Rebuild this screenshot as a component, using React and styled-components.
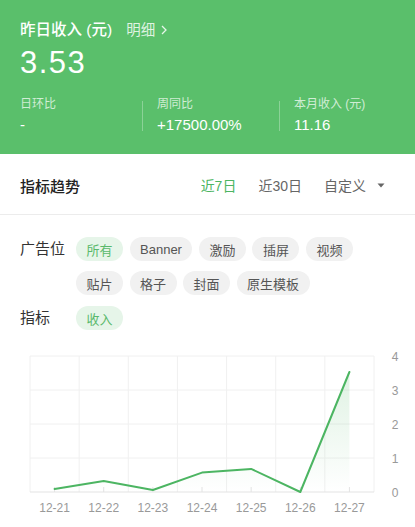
import React from "react";
import styled, { createGlobalStyle } from "styled-components";

const GlobalStyle = createGlobalStyle`
  html, body { margin: 0; padding: 0; background: #fff; }
  body {
    font-family: "Liberation Sans", "Noto Sans CJK SC", sans-serif;
    -webkit-font-smoothing: antialiased;
  }
  * { box-sizing: border-box; }
`;

const Page = styled.div`
  width: 415px;
  background: #fff;
`;

const Header = styled.header`
  background: #5abf6b;
  color: #fff;
  padding: 19px 20px 19px;
`;

const TitleRow = styled.div`
  display: flex;
  align-items: center;
  height: 22px;
`;

const Title = styled.span`
  font-size: 15.5px;
  line-height: 22px;
  font-weight: 500;
`;

const DetailLink = styled.span`
  display: inline-flex;
  align-items: center;
  gap: 6px;
  margin-left: 14px;
  font-size: 14.5px;
  line-height: 22px;
  color: rgba(255, 255, 255, 0.82);
`;

const BigNumber = styled.div`
  margin-top: 4px;
  font-size: 31px;
  letter-spacing: 1.5px;
  line-height: 36px;
`;

const StatsRow = styled.div`
  display: flex;
  align-items: center;
  margin-top: 15px;
`;

const Stat = styled.div`
  width: 122px;
  flex-shrink: 0;
  display: flex;
  flex-direction: column;
  gap: 2px;
  &:last-child {
    flex: 1;
    width: auto;
  }
`;

const StatLabel = styled.span`
  font-size: 12px;
  line-height: 17px;
  color: rgba(255, 255, 255, 0.72);
`;

const StatValue = styled.span`
  font-size: 15px;
  line-height: 20px;
  color: #fff;
`;

const Divider = styled.div`
  width: 1px;
  flex-shrink: 0;
  height: 30px;
  margin-right: 14px;
  background: rgba(255, 255, 255, 0.3);
`;

const SectionBar = styled.div`
  display: flex;
  align-items: center;
  height: 61px;
  padding: 2px 30px 0 20px;
  border-bottom: 1px solid #ececec;
`;

const SectionTitle = styled.span`
  flex: 1;
  font-size: 15px;
  font-weight: 500;
  color: #222;
`;

const Tabs = styled.div`
  display: flex;
  align-items: center;
  gap: 22px;
`;

const Tab = styled.span`
  display: inline-flex;
  align-items: center;
  gap: 11px;
  font-size: 14px;
  color: ${(p) => (p.$active ? "#4cb562" : "#666")};
`;

const Filters = styled.div`
  padding: 22px 20px 0 20px;
  display: flex;
  flex-direction: column;
  gap: 11px;
`;

const FilterRow = styled.div`
  display: flex;
  align-items: flex-start;
`;

const FilterLabel = styled.span`
  width: 56px;
  flex-shrink: 0;
  font-size: 15px;
  line-height: 24px;
  color: #333;
`;

const ChipWrap = styled.div`
  display: flex;
  flex-wrap: wrap;
  column-gap: 6.5px;
  row-gap: 10px;
`;

const Chip = styled.span`
  height: 24px;
  padding: 0 10.5px;
  border-radius: 12px;
  display: inline-flex;
  align-items: center;
  font-size: 13px;
  background: ${(p) => (p.$active ? "#e6f5e9" : "#f1f1f1")};
  color: ${(p) => (p.$active ? "#5ab96c" : "#555")};
`;

const ChartBox = styled.div`
  margin-top: 10px;
`;

const ChartSvg = styled.svg`
  display: block;
`;

const data = [
  { d: "12-21", v: 0.09 },
  { d: "12-22", v: 0.32 },
  { d: "12-23", v: 0.06 },
  { d: "12-24", v: 0.57 },
  { d: "12-25", v: 0.68 },
  { d: "12-26", v: 0 },
  { d: "12-27", v: 3.53 },
];

function Chart() {
  const left = 30;
  const right = 374;
  const top = 16;
  const bottom = 152;
  const colW = (right - left) / data.length;
  const yOf = (v) => bottom - (v / 4) * (bottom - top);
  const pts = data.map((p, i) => [left + colW * (i + 0.5), yOf(p.v)]);
  const line = pts.map((p, i) => `${i ? "L" : "M"}${p[0].toFixed(1)} ${p[1].toFixed(1)}`).join(" ");
  const area = `${line} L${pts[pts.length - 1][0].toFixed(1)} ${bottom} L${pts[0][0].toFixed(1)} ${bottom} Z`;
  return (
    <ChartSvg width="415" height="187" viewBox="0 0 415 187">
      <defs>
        <linearGradient id="fillGrad" x1="0" y1={top} x2="0" y2={bottom} gradientUnits="userSpaceOnUse">
          <stop offset="0" stopColor="#4cb562" stopOpacity="0.2" />
          <stop offset="1" stopColor="#4cb562" stopOpacity="0" />
        </linearGradient>
      </defs>
      {[0, 1, 2, 3].map((i) => (
        <line key={"h" + i} x1={left} x2={right} y1={top + i * 34} y2={top + i * 34} stroke="#f0f0f0" strokeWidth="1" />
      ))}
      {Array.from({ length: 8 }).map((_, i) => (
        <line key={"v" + i} x1={left + i * colW} x2={left + i * colW} y1={top} y2={bottom} stroke="#f0f0f0" strokeWidth="1" />
      ))}
      <line x1={left} x2={right} y1={bottom} y2={bottom} stroke="#e3e3e3" strokeWidth="1" />
      {pts.map((p, i) => (
        <line key={"t" + i} x1={p[0]} x2={p[0]} y1={bottom - 5} y2={bottom} stroke="#e3e3e3" strokeWidth="1" />
      ))}
      <path d={area} fill="url(#fillGrad)" />
      <path d={line} fill="none" stroke="#4cb562" strokeWidth="2" strokeLinejoin="round" strokeLinecap="round" />
      {[4, 3, 2, 1, 0].map((v, i) => (
        <text key={"y" + v} x="395" y={top + i * 34 + 4.5} textAnchor="middle" fontSize="12" fill="#999" fontFamily="Liberation Sans, sans-serif">
          {v}
        </text>
      ))}
      {pts.map((p, i) => (
        <text key={"x" + i} x={p[0]} y="172" textAnchor="middle" fontSize="12" fill="#999" fontFamily="Liberation Sans, sans-serif">
          {data[i].d}
        </text>
      ))}
    </ChartSvg>
  );
}

const slots = ["所有", "Banner", "激励", "插屏", "视频", "贴片", "格子", "封面", "原生模板"];

export default function App() {
  return (
    <Page>
      <GlobalStyle />
      <Header>
        <TitleRow>
          <Title>昨日收入 (元)</Title>
          <DetailLink>
            明细
            <svg width="6" height="10" viewBox="0 0 6 10">
              <path d="M1 1 L5 5 L1 9" fill="none" stroke="rgba(255,255,255,0.85)" strokeWidth="1.3" />
            </svg>
          </DetailLink>
        </TitleRow>
        <BigNumber>3.53</BigNumber>
        <StatsRow>
          <Stat>
            <StatLabel>日环比</StatLabel>
            <StatValue>-</StatValue>
          </Stat>
          <Divider />
          <Stat>
            <StatLabel>周同比</StatLabel>
            <StatValue>+17500.00%</StatValue>
          </Stat>
          <Divider />
          <Stat>
            <StatLabel>本月收入 (元)</StatLabel>
            <StatValue>11.16</StatValue>
          </Stat>
        </StatsRow>
      </Header>
      <SectionBar>
        <SectionTitle>指标趋势</SectionTitle>
        <Tabs>
          <Tab $active>近7日</Tab>
          <Tab>近30日</Tab>
          <Tab>
            自定义
            <svg width="8" height="5" viewBox="0 0 8 5">
              <path d="M0.5 0.5 L7.5 0.5 L4 4.5 Z" fill="#666" />
            </svg>
          </Tab>
        </Tabs>
      </SectionBar>
      <Filters>
        <FilterRow>
          <FilterLabel>广告位</FilterLabel>
          <ChipWrap>
            {slots.map((s, i) => (
              <Chip key={s} $active={i === 0}>
                {s}
              </Chip>
            ))}
          </ChipWrap>
        </FilterRow>
        <FilterRow>
          <FilterLabel>指标</FilterLabel>
          <ChipWrap>
            <Chip $active>收入</Chip>
          </ChipWrap>
        </FilterRow>
      </Filters>
      <ChartBox>
        <Chart />
      </ChartBox>
    </Page>
  );
}
